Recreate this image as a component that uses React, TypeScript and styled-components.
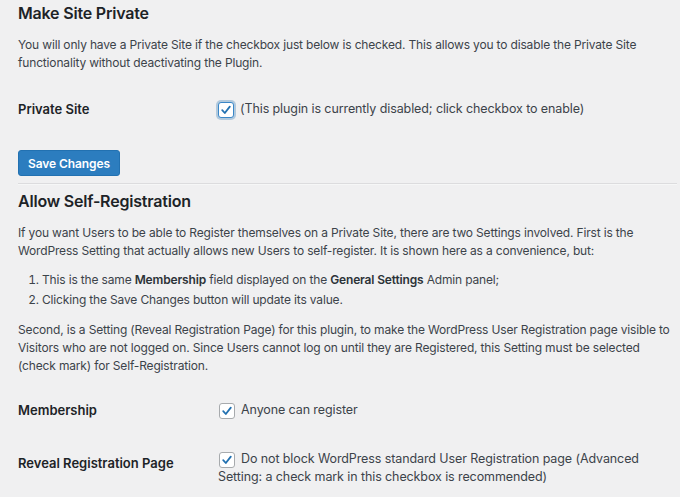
import React from 'react';
import styled, { createGlobalStyle } from 'styled-components';

const GlobalStyle = createGlobalStyle`
  html, body {
    margin: 0;
    padding: 0;
    background: #f0f0f1;
  }
  body {
    font-family: Inter, "Noto Sans", "Liberation Sans", sans-serif;
    font-size: 12.5px;
    letter-spacing: -0.1px;
    color: #3c434a;
  }
`;

const Page = styled.div`
  width: 680px;
  height: 497px;
  overflow: hidden;
  box-sizing: border-box;
  padding: 2px 3px 0 18px;
`;

const Heading = styled.h2`
  margin: 0;
  font-size: 16px;
  letter-spacing: -0.2px;
  line-height: 22px;
  font-weight: 600;
  color: #1d2327;
`;

const Paragraph = styled.p<{ $top: number }>`
  margin: ${(p) => p.$top}px 0 0;
  font-size: 12px;
  letter-spacing: -0.16px;
  line-height: 18px;
`;

const List = styled.ol`
  margin: 11px 0 0;
  padding-left: 24px;
  font-size: 12px;
  letter-spacing: -0.16px;
  line-height: 18px;
  li + li {
    margin-top: 2px;
  }
`;

const Strong = styled.strong`
  font-weight: 600;
  color: #2c3338;
`;

const SettingRow = styled.div<{ $top: number }>`
  display: grid;
  grid-template-columns: 200px 1fr;
  margin-top: ${(p) => p.$top}px;
  line-height: 18px;
`;

const RowLabel = styled.div<{ $offset?: number }>`
  font-size: 13px;
  letter-spacing: 0;
  font-weight: 600;
  color: #1d2327;
  padding-top: ${(p) => p.$offset || 0}px;
`;

const RowField = styled.div`
  padding-right: 30px;
`;

const Box = styled.span<{ $focus?: boolean }>`
  display: inline-flex;
  align-items: center;
  justify-content: center;
  width: 16px;
  height: 16px;
  box-sizing: border-box;
  vertical-align: -3px;
  margin: 0 6px 0 ${(p) => (p.$focus ? '0' : '1px')};
  background: #fff;
  border-radius: 3px;
  border: 1px solid ${(p) => (p.$focus ? '#3a87c8' : '#a7aaad')};
  box-shadow: ${(p) => (p.$focus ? '0 0 0 2px rgba(34, 113, 177, 0.3)' : 'none')};
`;

const Button = styled.button`
  display: block;
  margin-top: 32px;
  width: 102px;
  height: 26px;
  padding: 0;
  border: 1px solid #2271b1;
  border-radius: 3px;
  background: #2c7dbf;
  color: #fff;
  font-family: inherit;
  font-size: 12px;
  letter-spacing: -0.1px;
  font-weight: 600;
  cursor: pointer;
`;

const Divider = styled.hr`
  margin: 7px 0 5px;
  border: 0;
  border-top: 1px solid #dcdcde;
  border-bottom: 1px solid #f6f7f7;
`;

const Checkbox: React.FC<{ focus?: boolean }> = ({ focus }) => (
  <Box $focus={focus}>
    <svg width="12" height="12" viewBox="0 0 12 12">
      <path d="M2.2 6.2 L4.8 9 L9.8 2.6" fill="none" stroke="#2271b1" strokeWidth="1.8" strokeLinecap="round" strokeLinejoin="round" />
    </svg>
  </Box>
);

export default function App() {
  return (
    <Page>
      <GlobalStyle />
      <Heading>Make Site Private</Heading>
      <Paragraph $top={12}>
        You will only have a Private Site if the checkbox just below is checked. This allows you to disable the Private Site
        functionality without deactivating the Plugin.
      </Paragraph>
      <SettingRow $top={28}>
        <RowLabel>Private Site</RowLabel>
        <RowField>
          <Checkbox focus />
          (This plugin is currently disabled; click checkbox to enable)
        </RowField>
      </SettingRow>
      <Button>Save Changes</Button>
      <Divider />
      <Heading>Allow Self-Registration</Heading>
      <Paragraph $top={12}>
        If you want Users to be able to Register themselves on a Private Site, there are two Settings involved. First is the
        WordPress Setting that actually allows new Users to self-register. It is shown here as a convenience, but:
      </Paragraph>
      <List>
        <li>
          This is the same <Strong>Membership</Strong> field displayed on the <Strong>General Settings</Strong> Admin panel;
        </li>
        <li>Clicking the Save Changes button will update its value.</li>
      </List>
      <Paragraph $top={12}>
        Second, is a Setting (Reveal Registration Page) for this plugin, to make the WordPress User Registration page visible to
        Visitors who are not logged on. Since Users cannot log on until they are Registered, this Setting must be selected
        (check mark) for Self-Registration.
      </Paragraph>
      <SettingRow $top={26}>
        <RowLabel>Membership</RowLabel>
        <RowField>
          <Checkbox />
          Anyone can register
        </RowField>
      </SettingRow>
      <SettingRow $top={31}>
        <RowLabel $offset={4}>Reveal Registration Page</RowLabel>
        <RowField>
          <Checkbox />
          Do not block WordPress standard User Registration page (Advanced Setting: a check mark in this checkbox is
          recommended)
        </RowField>
      </SettingRow>
    </Page>
  );
}
